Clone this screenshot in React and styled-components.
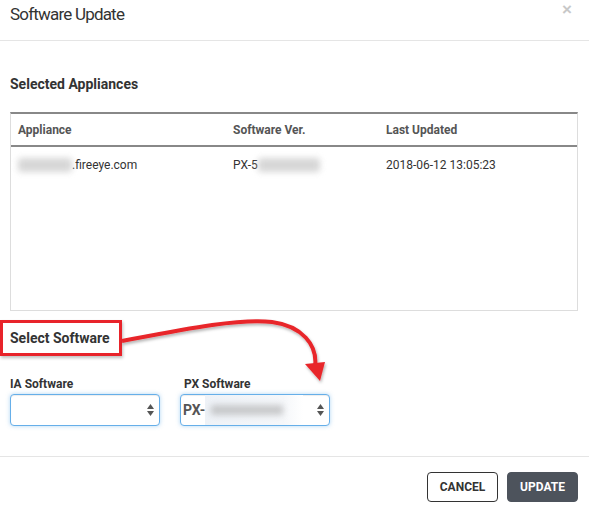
import styled, { createGlobalStyle } from "styled-components";

const GlobalStyle = createGlobalStyle`
    html, body {
        margin: 0;
        padding: 0;
        background: #fff;
        font-family: Roboto, "Liberation Sans", Arial, sans-serif;
        color: #333;
    }
    * { box-sizing: border-box; }
`;

const Modal = styled.div`
    position: relative;
    width: 589px;
    height: 514px;
    background: #fff;
`;
const Header = styled.header`
    height: 41px;
    padding: 0 10px;
    border-bottom: 1px solid #e5e5e5;
    display: flex;
    justify-content: space-between;
    align-items: flex-start;
`;
const Title = styled.h2`
    margin: 0;
    font-size: 17px;
    letter-spacing: -0.8px;
    font-weight: 400;
    line-height: 29px;
    color: #333;
`;
const Close = styled.button`
    border: 0;
    background: none;
    padding: 0;
    margin: 1px 7px 0 0;
    font-size: 17px;
    line-height: 18px;
    font-weight: 700;
    color: #c8c8c8;
    font-family: "Liberation Sans", Arial, sans-serif;
`;
const Body = styled.section`
    padding: 33px 11px 30px 10px;
    border-bottom: 1px solid #e5e5e5;
`;
const SectionTitle = styled.h4`
    margin: 0;
    font-size: 14px;
    font-weight: 700;
    line-height: 21px;
    color: #333;
`;
const Table = styled.div`
    margin-top: 17px;
    height: 199px;
    border: 1px solid #ddd;
    border-top: 2px solid #888;
    font-size: 12px;
`;
const Row = styled.div`
    display: grid;
    grid-template-columns: 215px 153px 1fr;
    height: ${(p) => (p.$head ? "33px" : "34px")};
    align-items: center;
    border-bottom: ${(p) => (p.$head ? "2px solid #888" : "none")};
    font-weight: ${(p) => (p.$head ? 700 : 400)};
    color: ${(p) => (p.$head ? "#555" : "#333")};
    padding-top: 1px;
    & > span {
        padding-left: 7px;
        white-space: nowrap;
        display: flex;
        align-items: center;
    }
`;
const Blur = styled.i`
    display: inline-block;
    width: ${(p) => p.$w}px;
    height: 14px;
    background: #c9c9c9;
    filter: blur(3px);
    border-radius: 3px;
    opacity: 0.75;
`;
const Callout = styled.div`
    margin: 9px 0 0 -10px;
    width: 122px;
    height: 36px;
    border: 3px solid #e8232a;
    padding-left: 7px;
    display: flex;
    align-items: center;
    box-shadow: 1px 2px 3px rgba(0, 0, 0, 0.25);
`;
const Fields = styled.div`
    display: flex;
    gap: 20px;
    margin-top: 20px;
`;
const Field = styled.div`
    width: 150px;
    display: flex;
    flex-direction: column;
    gap: 2px;
`;
const Label = styled.label`
    font-size: 12px;
    font-weight: 700;
    line-height: 16px;
    color: #333;
    padding-left: ${(p) => p.$indent || 0}px;
`;
const Select = styled.div`
    height: 32px;
    border: 1px solid #66afe9;
    border-radius: 4px;
    box-shadow: inset 0 1px 1px rgba(0, 0, 0, 0.075), 0 0 4px rgba(102, 175, 233, 0.5);
    display: flex;
    align-items: center;
    justify-content: space-between;
    padding: 0 4px 0 2px;
    background: #fff;
`;
const Value = styled.span`
    display: flex;
    align-items: center;
    font-size: 14px;
    font-weight: 700;
    color: #555;
    height: 100%;
`;
const Smudge = styled.span`
    display: flex;
    align-items: center;
    height: 30px;
    width: 98px;
    background: linear-gradient(90deg, #eef2f7, #f5f7fa 80%, #fff);
    & > i {
        display: inline-block;
        margin-left: 6px;
        width: 72px;
        height: 10px;
        background: #aaa;
        filter: blur(3px);
        opacity: 0.6;
    }
`;
const Footer = styled.footer`
    display: flex;
    justify-content: flex-end;
    gap: 9px;
    padding: 15px 11px 0 0;
`;
const Button = styled.button`
    width: 71px;
    height: 30px;
    border-radius: 4px;
    font-family: Roboto, "Liberation Sans", Arial, sans-serif;
    font-size: 12px;
    font-weight: 700;
    border: 1px solid ${(p) => (p.$primary ? "#4d535c" : "#333")};
    background: ${(p) => (p.$primary ? "#4d535c" : "#fff")};
    color: ${(p) => (p.$primary ? "#fff" : "#333")};
`;
const Overlay = styled.svg`
    position: absolute;
    left: 0;
    top: 0;
    pointer-events: none;
`;

function Carets() {
    return (
        <svg width="9" height="14" viewBox="0 0 9 14">
            <path d="M4.5 1 L8 6 H1 Z" fill="#555" />
            <path d="M4.5 13 L8 8 H1 Z" fill="#555" />
        </svg>
    );
}

export default function App() {
    return (
        <>
            <GlobalStyle />
            <Modal>
                <Header>
                    <Title>Software Update</Title>
                    <Close>×</Close>
                </Header>
                <Body>
                    <SectionTitle>Selected Appliances</SectionTitle>
                    <Table>
                        <Row $head>
                            <span>Appliance</span>
                            <span>Software Ver.</span>
                            <span>Last Updated</span>
                        </Row>
                        <Row>
                            <span><Blur $w={54} />.fireeye.com</span>
                            <span>PX-5<Blur $w={62} /></span>
                            <span>2018-06-12 13:05:23</span>
                        </Row>
                    </Table>
                    <Callout>
                        <SectionTitle>Select Software</SectionTitle>
                    </Callout>
                    <Fields>
                        <Field>
                            <Label>IA Software</Label>
                            <Select>
                                <Value />
                                <Carets />
                            </Select>
                        </Field>
                        <Field>
                            <Label $indent={4}>PX Software</Label>
                            <Select>
                                <Value>PX-<Smudge><i /></Smudge></Value>
                                <Carets />
                            </Select>
                        </Field>
                    </Fields>
                </Body>
                <Footer>
                    <Button>CANCEL</Button>
                    <Button $primary>UPDATE</Button>
                </Footer>
                <Overlay width="589" height="514">
                    <defs>
                        <filter id="sh" x="-20%" y="-20%" width="140%" height="140%">
                            <feDropShadow dx="1" dy="2" stdDeviation="1.5" floodOpacity="0.3" />
                        </filter>
                    </defs>
                    <g filter="url(#sh)">
                        <path d="M122 341 C185 329 240 318 272 322 C302 326 318 345 315 367" fill="none" stroke="#e8262b" strokeWidth="4" />
                        <polygon points="305,364 325,362 320,381" fill="#e8262b" />
                    </g>
                </Overlay>
            </Modal>
        </>
    );
}
